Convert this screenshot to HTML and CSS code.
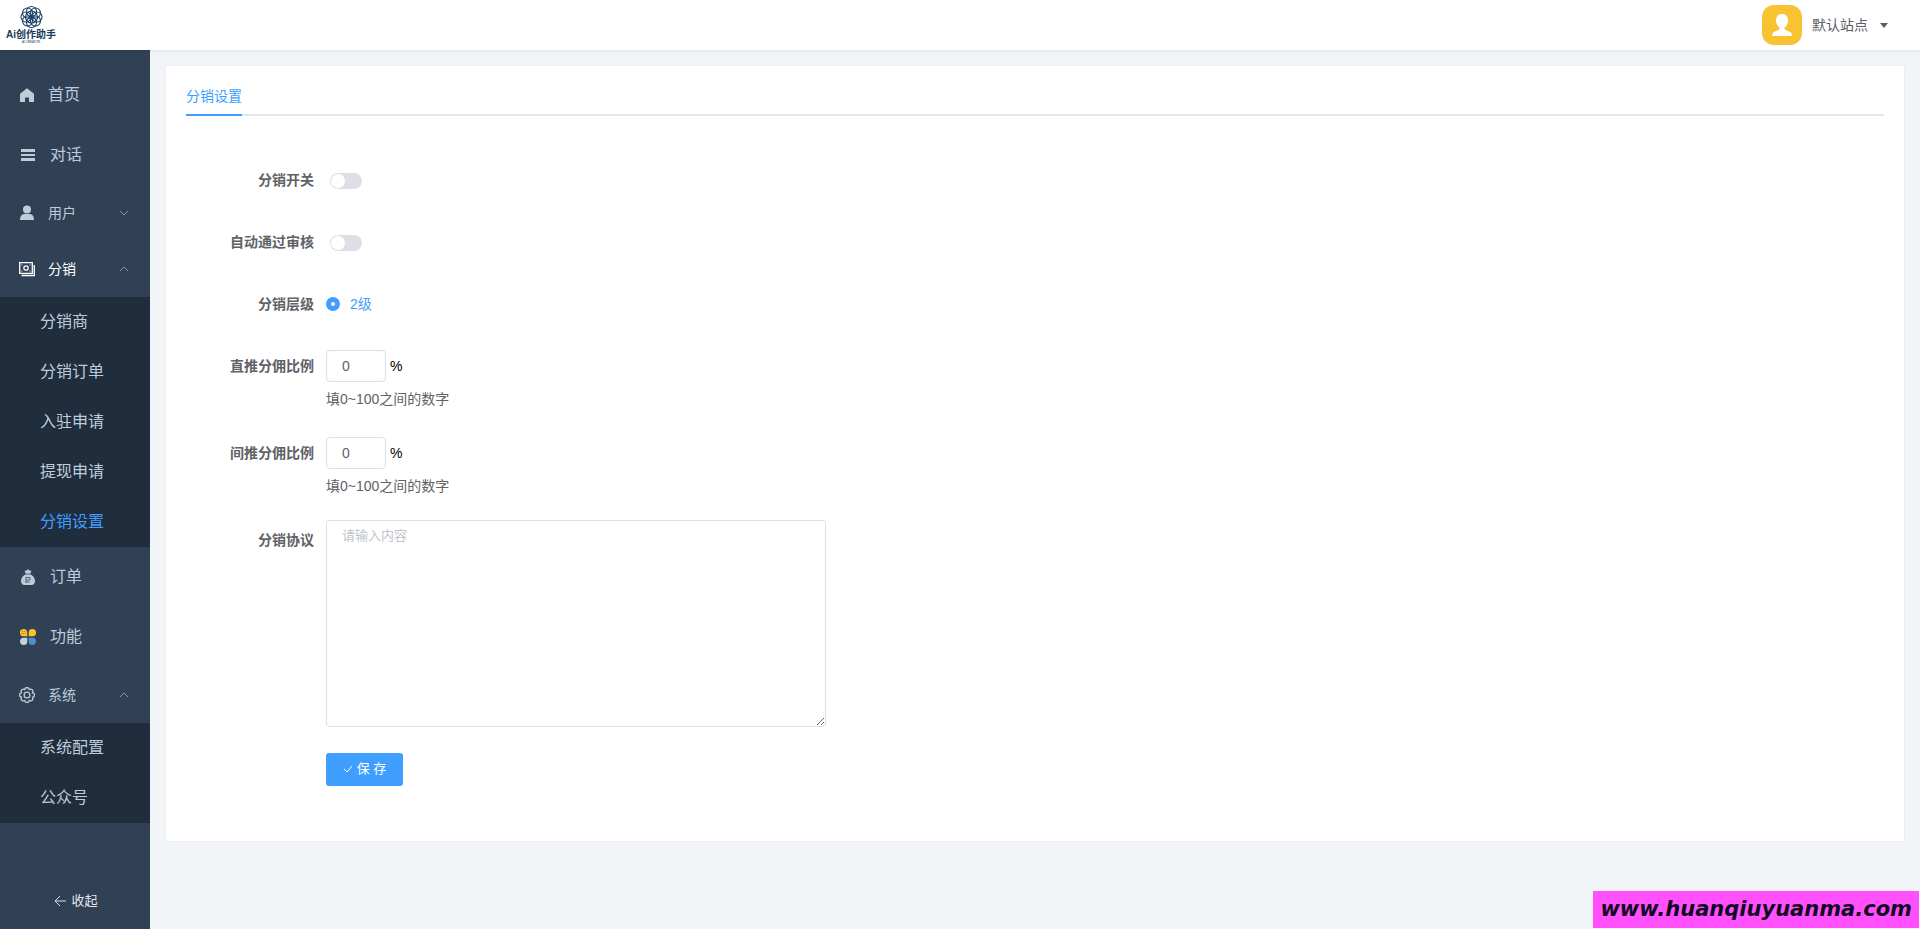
FILE: index.html
```html
<!DOCTYPE html>
<html lang="zh-CN">
<head>
<meta charset="utf-8">
<title>分销设置</title>
<link rel="stylesheet" href="styles.css">
</head>
<body>
<header class="header">
  <a class="logo" href="#">
    <svg class="logo-mark" viewBox="0 0 48 48" fill="none" stroke="#1f4468" stroke-width="2.200">
      <circle cx="24" cy="24" r="4"/>
      <circle cx="24" cy="24" r="12"/>
      <circle cx="24" cy="13" r="10"/><circle cx="32" cy="16" r="10"/>
      <circle cx="35" cy="24" r="10"/><circle cx="32" cy="32" r="10"/>
      <circle cx="24" cy="35" r="10"/><circle cx="16" cy="32" r="10"/>
      <circle cx="13" cy="24" r="10"/><circle cx="16" cy="16" r="10"/>
    </svg>
    <span class="logo-name">Ai创作助手</span>
    <span class="logo-sub">-AI CREATOR-</span>
  </a>
  <button class="account" type="button">
    <svg class="avatar" viewBox="0 0 40 40">
      <rect width="40" height="40" rx="12" fill="#f8c332"/>
      <path fill="#fff" d="M20 9c-3.800 0-6 2.600-6 6.200 0 3 1.200 5.800 3.500 7.300v1.800c-1.200 1.200-4.500 1.700-6 3-1 .9-1.500 2-1.500 3.400C12 31.400 16 31 20 31s8 .4 10-.3c0-1.400-.5-2.500-1.500-3.400-1.500-1.300-4.800-1.800-6-3v-1.800c2.300-1.500 3.500-4.300 3.500-7.300C26 11.600 23.800 9 20 9z"/>
    </svg>
    <span>默认站点</span>
    <svg class="caret" viewBox="0 0 8 5"><path d="M0 0h8L4 5z" fill="#5a5e66"/></svg>
  </button>
</header>

<div class="shell">
  <aside class="sidebar">
    <nav class="menu">
      <a class="item home" href="#">
        <svg class="icon" viewBox="0 0 16 16" fill="#bfcbd9"><path d="M8 1.200 1 6.800V15h5v-4.500h4V15h5V6.800z"/></svg>
        <span>首页</span>
      </a>
      <a class="item" href="#">
        <svg class="icon" viewBox="0 0 16 16" fill="#bfcbd9"><path d="M1 2h14v3H1zM1 7h14v2H1zM1 11h14v3H1z"/></svg>
        <span>对话</span>
      </a>
      <button class="item group" type="button" aria-expanded="false">
        <svg class="icon" viewBox="0 0 16 16" fill="#bfcbd9"><circle cx="8" cy="4.500" r="4"/><path d="M1 15c0-4 2-6 4.500-6h5c2.500 0 4.500 2 4.500 6z"/></svg>
        <span>用户</span>
        <svg class="arrow" viewBox="0 0 10 6"><path d="m1 1 4 4 4-4"/></svg>
      </button>
      <button class="item group current" type="button" aria-expanded="true">
        <svg class="icon" viewBox="0 0 16 16" fill="none" stroke="#fff" stroke-width="1.300"><path d="M.7 1.700h12.600v10.600H.7z"/><circle cx="7" cy="7" r="2.200"/><path d="M2.500 14.500h12.800V4"/><path d="M3 3.500v1M11 3.500v1M3 9.500v1M11 9.500v1" stroke-width="1"/></svg>
        <span>分销</span>
        <svg class="arrow" viewBox="0 0 10 6"><path d="m1 5 4-4 4 4"/></svg>
      </button>
      <div class="submenu">
        <a href="#">分销商</a>
        <a href="#">分销订单</a>
        <a href="#">入驻申请</a>
        <a href="#">提现申请</a>
        <a class="selected" href="#">分销设置</a>
      </div>
      <a class="item" href="#">
        <svg class="icon" viewBox="0 0 16 16"><path fill="#bfcbd9" d="m8 0 1.200 1.500 2.300.2L10.500 4l-.3 1.300c2.900 1.300 4.800 4 4.800 6.800 0 2.400-1.200 3.900-3.400 3.900H4.400C2.200 16 1 14.500 1 12.100c0-2.800 1.900-5.500 4.800-6.800L5.500 4l-1-2.300 2.300-.2z"/><path fill="none" stroke="#52657a" d="M5.500 5h5M6 8.500h4v2.500H6M6 8v6M5.500 13h4"/></svg>
        <span>订单</span>
      </a>
      <a class="item" href="#">
        <svg class="icon" viewBox="0 0 16 16"><path fill="#fbc02d" d="M3.600 0a3.500 3.500 0 0 1 3.700 3.600v3.700H3.600a3.600 3.600 0 0 1 0-7.300zM12.400 0a3.600 3.600 0 0 1 0 7.300H8.700V3.600A3.600 3.600 0 0 1 12.400 0z"/><path fill="#c7d1dc" d="M3.600 8.700h3.700v3.700a3.650 3.650 0 1 1-3.700-3.700z"/><path fill="#4c92c3" d="M8.700 8.700h3.700a3.650 3.650 0 1 1-3.700 3.700z"/><path stroke="#b5762b" stroke-dasharray="1 1" d="M2 2.500h4M1 4.500h5"/></svg>
        <span>功能</span>
      </a>
      <button class="item group" type="button" aria-expanded="true">
        <svg class="icon" viewBox="0 0 16 16" fill="none" stroke="#bfcbd9" stroke-width="1.300" stroke-linejoin="round"><path d="M5.800 2.700a2.200 2.200 0 0 1 4.400 0a2.200 2.200 0 0 1 3.100 3.100a2.200 2.200 0 0 1 0 4.400a2.200 2.200 0 0 1-3.100 3.100a2.200 2.200 0 0 1-4.400 0a2.200 2.200 0 0 1-3.100-3.100a2.200 2.200 0 0 1 0-4.400a2.200 2.200 0 0 1 3.100-3.100z"/><circle cx="8" cy="8" r="2.900"/></svg>
        <span>系统</span>
        <svg class="arrow" viewBox="0 0 10 6"><path d="m1 5 4-4 4 4"/></svg>
      </button>
      <div class="submenu">
        <a href="#">系统配置</a>
        <a href="#">公众号</a>
      </div>
    </nav>
    <button class="collapse" type="button">
      <svg viewBox="0 0 12 12"><path d="M12 6H1M6 1 1 6l5 5"/></svg>
      <span>收起</span>
    </button>
  </aside>

  <main class="main">
    <section class="card">
      <div class="tabs" role="tablist">
        <button class="tab" type="button" role="tab" aria-selected="true">分销设置</button>
      </div>
      <form class="form">
        <div class="row">
          <label class="label" for="enable">分销开关</label>
          <div class="field"><input class="switch" id="enable" type="checkbox" role="switch"></div>
        </div>
        <div class="row">
          <label class="label" for="auto">自动通过审核</label>
          <div class="field"><input class="switch" id="auto" type="checkbox" role="switch"></div>
        </div>
        <div class="row">
          <span class="label">分销层级</span>
          <div class="field">
            <input class="radio" id="level2" type="radio" name="level" checked>
            <label class="radio-text" for="level2">2级</label>
          </div>
        </div>
        <div class="row">
          <label class="label" for="direct">直推分佣比例</label>
          <div class="stack">
            <div class="field"><input class="number" id="direct" type="text" value="0"><span class="unit">%</span></div>
            <p class="hint">填0~100之间的数字</p>
          </div>
        </div>
        <div class="row">
          <label class="label" for="indirect">间推分佣比例</label>
          <div class="stack">
            <div class="field"><input class="number" id="indirect" type="text" value="0"><span class="unit">%</span></div>
            <p class="hint">填0~100之间的数字</p>
          </div>
        </div>
        <div class="row">
          <label class="label" for="agreement">分销协议</label>
          <textarea class="textarea" id="agreement" placeholder="请输入内容"></textarea>
        </div>
        <div class="row actions">
          <div class="field">
            <button class="save" type="button">
              <svg viewBox="0 0 10 8"><path d="m1 4 3 3 5-6"/></svg>
              <span>保 存</span>
            </button>
          </div>
        </div>
      </form>
    </section>
  </main>
</div>
<div class="watermark">www.huanqiuyuanma.com</div>
</body>
</html>
```
FILE: styles.css
```css
* { box-sizing: border-box; }

body {
  margin: 0;
  min-height: 100vh;
  display: flex;
  flex-direction: column;
  background: #f1f5f8;
  color: #606266;
  font: 14px/20px "Liberation Sans", "Noto Sans CJK SC", sans-serif;
}

button, input, textarea { font: inherit; color: inherit; }
button { border: 0; padding: 0; background: none; cursor: pointer; }
a { color: inherit; text-decoration: none; }
svg { display: block; flex: none; }

.header {
  position: relative;
  height: 50px;
  display: flex;
  justify-content: space-between;
  align-items: center;
  padding: 0 32px 0 4px;
  background: #fff;
  box-shadow: 0 1px 4px rgba(0, 21, 41, 0.08);
}

.logo {
  width: 54px;
  display: flex;
  flex-direction: column;
  align-items: center;
  color: #17395c;
  white-space: nowrap;
}
.logo-mark { width: 25px; height: 24px; }
.logo-name { font-size: 10px; line-height: 11px; font-weight: 700; }
.logo-sub { font-size: 3px; line-height: 5px; }

.account { display: flex; align-items: center; color: #5a5e66; }
.avatar { width: 40px; height: 40px; margin-right: 10px; }
.caret { width: 8px; height: 5px; margin-left: 12px; }

.shell { flex: 1; display: flex; }

.sidebar {
  flex: none;
  width: 150px;
  display: flex;
  flex-direction: column;
  justify-content: space-between;
  padding: 15px 0;
  background: #304156;
  color: #bfcbd9;
}

.menu { display: flex; flex-direction: column; }
.item {
  height: 60px;
  display: flex;
  align-items: center;
  gap: 14px;
  padding: 0 20px;
  font-size: 16px;
}
.home { gap: 13px; padding-left: 19px; }
.group { height: 56px; gap: 13px; padding: 0 21px 0 19px; font-size: 14px; }
.current { color: #fff; }
.icon { width: 16px; height: 16px; }
.arrow {
  width: 10px;
  height: 6px;
  margin-left: auto;
  fill: none;
  stroke: #909399;
}

.submenu { background: #1f2d3d; font-size: 16px; line-height: 50px; }
.submenu a { display: block; padding-left: 40px; }
.submenu .selected { color: #409eff; }

.collapse {
  display: flex;
  justify-content: center;
  align-items: center;
  gap: 5px;
  height: 26px;
  padding-left: 2px;
  color: #e4e7ed;
  font-size: 13px;
}
.collapse svg { width: 12px; height: 12px; fill: none; stroke: #dcdfe6; }

.main { flex: 1; min-width: 0; padding: 15px; }
.card {
  padding: 10px 20px 20px;
  background: #fff;
  border: 1px solid #ebeef5;
}

.tabs { display: flex; box-shadow: inset 0 -2px #e4e7ed; }
.tab {
  height: 40px;
  padding-top: 2px;
  color: #409eff;
  border-bottom: 2px solid #409eff;
}

.form { padding-top: 44px; }
.row { display: flex; align-items: flex-start; margin-bottom: 22px; }
.label {
  flex: none;
  width: 140px;
  padding-right: 12px;
  text-align: right;
  font-weight: 700;
  line-height: 40px;
}
.field { display: flex; align-items: center; height: 40px; }
.actions { padding-left: 140px; margin-bottom: 32px; }

.switch {
  appearance: none;
  display: flex;
  width: 32px;
  height: 16px;
  margin: 2px 4px 0;
  padding: 1px;
  border-radius: 8px;
  background: #dcdfe6;
}
.switch::before { content: ""; width: 14px; height: 14px; border-radius: 50%; background: #fff; }
.switch:checked { background: #409eff; justify-content: flex-end; }

.radio {
  appearance: none;
  width: 14px;
  height: 14px;
  margin: 0 10px 0 0;
  border: 1px solid #dcdfe6;
  border-radius: 50%;
}
.radio:checked { border: 5px solid #409eff; background: #fff; }
.radio-text { color: #409eff; }

.number, .textarea {
  border: 1px solid #dcdfe6;
  border-radius: 4px;
  background: #fff;
  outline: 0;
}
.number { width: 60px; height: 32px; padding: 0 15px; }
.unit { margin-left: 4px; color: #000; }
.hint { margin: 0; line-height: 26px; margin-bottom: -1px; }

.textarea {
  width: 500px;
  max-width: 100%;
  height: 207px;
  padding: 5px 15px;
  font-size: 13px;
  resize: both;
}
.textarea::placeholder { color: #c0c4cc; }

.save {
  display: flex;
  align-items: center;
  justify-content: center;
  gap: 4px;
  width: 77px;
  height: 33px;
  border-radius: 3px;
  background: #409eff;
  color: #fff;
  font-size: 13px;
}
.save svg { width: 10px; height: 8px; fill: none; stroke: #fff; }

.watermark {
  position: fixed;
  right: 1px;
  bottom: 1px;
  padding: 0 7px;
  background: #ff50fb;
  color: #120a24;
  font: italic 700 21px/37px "DejaVu Sans", sans-serif;
}
```
